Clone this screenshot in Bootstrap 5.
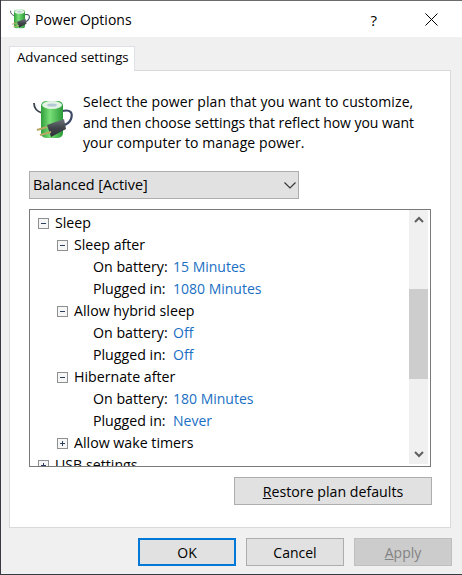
<!DOCTYPE html>
<html lang="en">
<head>
  <meta charset="UTF-8" />
  <title>Power Options</title>
  <link href="https://cdn.jsdelivr.net/npm/bootstrap@5.3.0/dist/css/bootstrap.min.css" rel="stylesheet" />
  <style>
    html, body { width: 462px; height: 575px; margin: 0; overflow: hidden; background: #3a3a42; }
    body, .btn { font-family: "Open Sans", "Noto Sans", sans-serif; font-size: 14px; line-height: 20px; color: #000; }
    .dlg-window { width: 461px; height: 574px; margin: 0 0 0 1px; background: #f0f0f0; border-top: 1px solid #6b6b6b; }
    .dlg-title { height: 36px; background: #fff; padding: 1px 24px 0 9px; }
    .dlg-title .dlg-name { font-size: 14px; margin-left: 5px; }
    .dlg-help { margin-right: 48px; font-size: 15px; }
    .dlg-body { padding: 9px 11px 0 8px; }
    .dlg-tabs { border: 0; }
    .dlg-tabs .nav-link { height: 25px; padding: 0 6px 0 7px; margin: 0; font-size: 13.2px; color: #000; background: #fff; border: 1px solid #d9d9d9; border-bottom: 0; border-radius: 0; width: 126px; white-space: nowrap; }
    .dlg-panel { height: 458px; margin-top: -1px; background: #fff; border: 1px solid #d9d9d9; padding: 0 18px 0 19px; }
    .dlg-intro { height: 100px; padding: 21px 0 0 4px; }
    .dlg-intro svg { flex: none; margin: 8px 10px 0 0; }
    .dlg-intro p { margin: 0; line-height: 20.5px; font-size: 14px; letter-spacing: -.05px; white-space: nowrap; }
    .intro-first { letter-spacing: .11px; }
    .intro-last { letter-spacing: .08px; }
    .plan-select { width: 270px; height: 28px; padding: 0 2px 0 3px; background: #e1e1e1; border: 1px solid #adadad; font-size: 14.4px; }
    .tree-box { width: 402px; height: 258px; margin-top: 10px; border: 1px solid #7a7a7a; background: #fff; }
    .tree-rows { flex: 1; height: 256px; overflow: hidden; padding-top: 2px; }
    .tree-row { height: 22px; line-height: 22px; white-space: nowrap; font-size: 14.2px; }
    .lvl-0 { padding-left: 8px; }
    .lvl-1 { padding-left: 27px; }
    .lvl-2 { padding-left: 63px; }
    .tree-label { display: inline-block; width: 80px; }
    .tree-val { color: #1a6fc4; font-size: 14px; }
    .tree-tog { width: 11px; height: 11px; margin-right: 6px; flex: none; }
    .tree-scroll { width: 19px; margin-right: 2px; height: 254px; background: #f0f0f0; }
    .scroll-btn { height: 19px; }
    .scroll-fill { height: 60px; }
    .scroll-thumb { height: 90px; background: #cdcdcd; }
    .restore-row { width: 403px; margin-top: 10px; }
    .dlg-btn.btn { height: 28px; padding: 0; font-size: 14px; line-height: 25px; border-radius: 0; background: #e1e1e1; border: 1px solid #adadad; color: #000; width: 98px; }
    .dlg-btn.btn-wide { width: 198px; font-size: 14.2px; }
    .dlg-btn.btn-ok { border: 2px solid #0078d7; }
    .dlg-btn.btn-off { background: #ccc; border-color: #bfbfbf; color: #838383; opacity: 1; }
    .dlg-footer { padding: 10px 0 0 0; gap: 10px; width: 443px; }
  </style>
</head>
<body>
  <svg width="0" height="0" class="d-block">
    <defs>
      <linearGradient id="batt" x1="0" x2="1" y1="0" y2="0">
        <stop offset="0" stop-color="#2f9e3c"/><stop offset=".4" stop-color="#7adf78"/><stop offset="1" stop-color="#2a9a38"/>
      </linearGradient>
      <linearGradient id="plug" x1="0" x2="0" y1="0" y2="1">
        <stop offset="0" stop-color="#6d737a"/><stop offset=".5" stop-color="#40454b"/><stop offset="1" stop-color="#2c3035"/>
      </linearGradient>
      <symbol id="power-icon" viewBox="0 0 40 41">
        <path d="M1 3c0 6 3 8 8 10" fill="none" stroke="#3c4650" stroke-width="1.800"/>
        <path d="M29 11c9-2 11 2 9 8-2 5-6 6-9 7" fill="none" stroke="#3c4a66" stroke-width="2.200"/>
        <rect x="8" y="1" width="22" height="37" rx="5" fill="url(#batt)"/>
        <ellipse cx="19" cy="5" rx="10" ry="4" fill="#e3f2e3"/>
        <ellipse cx="19" cy="5" rx="5" ry="1.600" fill="#b4c8d4"/>
        <path d="M14 25l17-6 2 10-15 8z" fill="url(#plug)"/>
        <path d="M4 30l10-3M7 35l11-3" stroke="#b9a866" stroke-width="2"/>
      </symbol>
    </defs>
  </svg>

  <div class="dlg-window d-flex flex-column">
    <!-- Title bar -->
    <div class="dlg-title d-flex align-items-center">
      <svg width="20" height="21"><use href="#power-icon"/></svg>
      <span class="dlg-name flex-grow-1">Power Options</span>
      <span class="dlg-help">?</span>
      <svg width="13" height="13" viewBox="0 0 13 13"><path d="M.5.500l12 12M12.500.500l-12 12" stroke="#000" stroke-width="1" fill="none"/></svg>
    </div>

    <div class="dlg-body">
      <ul class="nav nav-tabs dlg-tabs">
        <li class="nav-item"><a class="nav-link active" href="#">Advanced settings</a></li>
      </ul>
      <div class="dlg-panel">
        <div class="dlg-intro d-flex">
          <svg width="40" height="41"><use href="#power-icon"/></svg>
          <p><span class="intro-first">Select the power plan that you want to customize,</span><br>and then choose settings that reflect how you want<br><span class="intro-last">your computer to manage power.</span></p>
        </div>

        <div class="plan-select d-flex align-items-center justify-content-between">
          <span>Balanced [Active]</span>
          <svg width="12" height="7" viewBox="0 0 12 7"><path d="M.5.500l5.500 5.500 5.500-5.500" fill="none" stroke="#333" stroke-width="1.100"/></svg>
        </div>

        <div class="tree-box d-flex">
          <div class="tree-rows" id="tree"></div>
          <div class="tree-scroll d-flex flex-column">
            <div class="scroll-btn d-flex align-items-center justify-content-center">
              <svg width="10" height="7" viewBox="0 0 10 7"><path d="M1 6l4-4 4 4" fill="none" stroke="#606060" stroke-width="2"/></svg>
            </div>
            <div class="scroll-fill"></div>
            <div class="scroll-thumb"></div>
            <div class="flex-grow-1"></div>
            <div class="scroll-btn d-flex align-items-center justify-content-center">
              <svg width="10" height="7" viewBox="0 0 10 7"><path d="M1 1l4 4 4-4" fill="none" stroke="#606060" stroke-width="2"/></svg>
            </div>
          </div>
        </div>

        <div class="restore-row d-flex justify-content-end">
          <button class="btn dlg-btn btn-wide" type="button"><u>R</u>estore plan defaults</button>
        </div>
      </div>

      <div class="dlg-footer d-flex justify-content-end">
        <button class="btn dlg-btn btn-ok" type="button">OK</button>
        <button class="btn dlg-btn" type="button">Cancel</button>
        <button class="btn dlg-btn btn-off" type="button" disabled><u>A</u>pply</button>
      </div>
    </div>
  </div>

  <script src="https://cdn.jsdelivr.net/npm/bootstrap@5.3.0/dist/js/bootstrap.bundle.min.js"></script>
  <script>
    // Tree rows: [level, label, value]; level 0/1 rows get an expander
    const rows = [
      [0, "Sleep", "-"],
      [1, "Sleep after", "-"],
      [2, "On battery:", "15 Minutes"],
      [2, "Plugged in:", "1080 Minutes"],
      [1, "Allow hybrid sleep", "-"],
      [2, "On battery:", "Off"],
      [2, "Plugged in:", "Off"],
      [1, "Hibernate after", "-"],
      [2, "On battery:", "180 Minutes"],
      [2, "Plugged in:", "Never"],
      [1, "Allow wake timers", "+"],
      [0, "USB settings", "+"]
    ];
    const toggle = sign => `<svg class="tree-tog" viewBox="0 0 11 11"><rect x=".5" y=".5" width="10" height="10" fill="#f6f6f6" stroke="#8e8f8f"/><path d="M3 5.500h5${sign === "+" ? "M5.500 3v5" : ""}" stroke="#2c3e60"/></svg>`;
    document.getElementById("tree").innerHTML = rows.map(([lvl, label, val]) => lvl < 2
      ? `<div class="tree-row lvl-${lvl} d-flex align-items-center">${toggle(val)}<span>${label}</span></div>`
      : `<div class="tree-row lvl-2"><span class="tree-label">${label}</span><span class="tree-val">${val}</span></div>`
    ).join("");
  </script>
</body>
</html>
